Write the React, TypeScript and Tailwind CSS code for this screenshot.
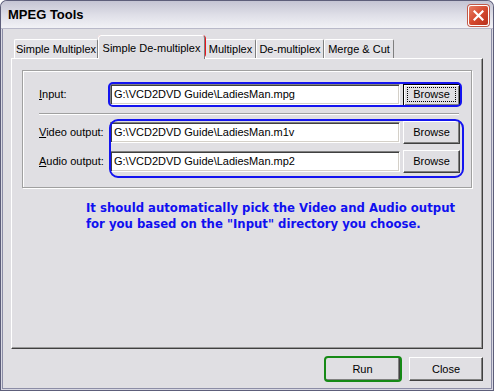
import { ReactNode } from "react"

const ui = "font-['Tahoma','Liberation_Sans',sans-serif] text-[11px] text-black"

function Tab({ label, width, active }: { label: string; width: number; active?: boolean }) {
  if (active) {
    return (
      <div
        style={{ width }}
        className="relative z-10 -mb-px flex h-[24px] items-start justify-center rounded-t-[3px] border-l border-t border-r border-l-white border-t-white border-r-[#7f7f7f] bg-[#e0dfe3] pt-[4px]"
      >
        {label}
      </div>
    )
  }
  return (
    <div
      style={{ width }}
      className="flex h-[19px] items-center justify-center rounded-t-[2px] border-l border-t border-r border-l-white border-t-white border-r-[#7f7f7f] bg-[#e3e2e6] pt-[1px]"
    >
      {label}
    </div>
  )
}

function Field({ value }: { value: string }) {
  return (
    <div className="flex h-[21px] w-[290px] items-center border border-t-[#808080] border-l-[#808080] border-r-white border-b-white bg-white pl-[3px] shadow-[inset_1px_1px_0_#404040,inset_-1px_-1px_0_#d4d0c8]">
      {value}
    </div>
  )
}

function Btn({ children, w, h, focused }: { children: ReactNode; w: number; h: number; focused?: boolean }) {
  if (focused) {
    return (
      <div
        style={{ width: w, height: h }}
        className="flex items-center justify-center border border-black bg-[#e0dfe3] shadow-[inset_1px_1px_0_#fff,inset_-1px_-1px_0_#808080]"
      >
        <span className="border border-dotted border-black px-[5px] leading-[13px]">{children}</span>
      </div>
    )
  }
  return (
    <div
      style={{ width: w, height: h }}
      className="flex items-center justify-center border border-t-white border-l-white border-r-[#404040] border-b-[#404040] bg-[#e0dfe3] shadow-[inset_-1px_-1px_0_#808080]"
    >
      {children}
    </div>
  )
}

function Row({ label, value, focused }: { label: ReactNode; value: string; focused?: boolean }) {
  return (
    <div className="flex h-[23px] items-center">
      <div className="w-[71px]">{label}</div>
      <Field value={value} />
      <div className="ml-[3px]">
        <Btn w={57} h={focused ? 22 : 23} focused={focused}>
          Browse
        </Btn>
      </div>
    </div>
  )
}

export default function App() {
  return (
    <div className={`relative h-[391px] w-[494px] overflow-hidden rounded-t-[7px] bg-[#e0dfe3] shadow-[inset_0_0_0_1px_#5d5e7a,inset_0_0_0_2px_#d9d9e3,inset_0_0_0_3px_#8c8da6] ${ui}`}>
      {/* title bar */}
      <div className="mx-px mt-px flex h-[28px] items-center justify-between rounded-t-[6px] border-b border-b-[#b9b9c9] bg-gradient-to-b from-[#c4c4d3] via-[#dedee7] to-[#f2f2f6] pl-[7px] pr-[4px]">
        <span className="font-['Liberation_Sans',sans-serif] text-[13px] font-bold text-black">MPEG Tools</span>
        <div className="mt-px flex h-[21px] w-[21px] items-center justify-center rounded-[3px] border border-white bg-gradient-to-br from-[#e67c63] via-[#d5492f] to-[#b8301c] shadow-[0_0_0_1px_#c05a4a]">
          <svg width="11" height="11" viewBox="0 0 11 11">
            <path d="M1.5 1.5 L9.5 9.5 M9.5 1.5 L1.5 9.5" stroke="#fff" strokeWidth="2.2" strokeLinecap="square" />
          </svg>
        </div>
      </div>

      <div className="flex flex-col px-[11px] pt-[6px]">
        {/* tabs */}
        <div className="flex h-[23px] items-end pl-[3px]">
          <Tab label="Simple Multiplex" width={84} />
          <Tab label="Simple De-multiplex" width={107} active />
          <Tab label="Multiplex" width={51} />
          <Tab label="De-multiplex" width={68} />
          <Tab label="Merge & Cut" width={70} />
        </div>

        {/* panel */}
        <div className="h-[291px] w-[472px] border border-t-white border-l-white border-r-[#404040] border-b-[#404040] shadow-[inset_-1px_-1px_0_#9a9a9a]">
          <div className="ml-[10px] mt-[11px] h-[118px] w-[450px] border border-[#a0a0a0] pl-[16px] pt-[12px] shadow-[inset_1px_1px_0_#fff,1px_1px_0_#fff]">
            <Row
              label={
                <span>
                  <u>I</u>nput:
                </span>
              }
              value="G:\VCD2DVD Guide\LadiesMan.mpg"
              focused
            />
            <div className="mt-[7px] h-[2px] w-[420px] border-t border-t-[#a0a0a0] border-b border-b-white" />
            <div className="mt-[6px]">
              <Row
                label={
                  <span>
                    <u>V</u>ideo output:
                  </span>
                }
                value="G:\VCD2DVD Guide\LadiesMan.m1v"
              />
            </div>
            <div className="mt-[6px]">
              <Row
                label={
                  <span>
                    <u>A</u>udio output:
                  </span>
                }
                value="G:\VCD2DVD Guide\LadiesMan.mp2"
              />
            </div>
          </div>

          <div className="ml-[74px] mt-[12px] font-['DejaVu_Sans',sans-serif] text-[11.7px] font-bold leading-[16px] text-[#1010f0]">
            <div>It should automatically pick the Video and Audio output</div>
            <div>for you based on the "Input" directory you choose.</div>
          </div>
        </div>

        {/* bottom buttons */}
        <div className="mt-[8px] flex justify-end gap-[9px]">
          <Btn w={75} h={24}>Run</Btn>
          <Btn w={74} h={24}>Close</Btn>
        </div>
      </div>

      {/* annotations */}
      <div className="absolute left-[98px] top-[35px] h-[23px] w-[108px] rounded-[4px] border-2 border-[#e8141c]" />
      <div className="absolute left-[108px] top-[82px] h-[25px] w-[354px] rounded-[5px] border-2 border-[#1414f0]" />
      <div className="absolute left-[109px] top-[119px] h-[59px] w-[355px] rounded-[9px] border-2 border-[#1414f0]" />
      <div className="absolute left-[324px] top-[356px] h-[26px] w-[78px] rounded-[4px] border-2 border-[#168a16]" />
    </div>
  )
}
